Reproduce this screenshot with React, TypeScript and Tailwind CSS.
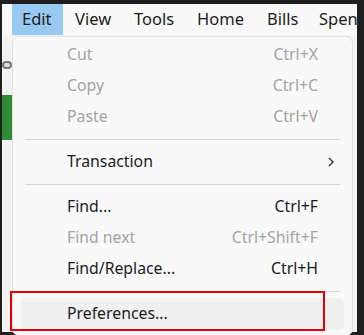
import React from "react";

type Item =
  | { kind: "item"; label: string; shortcut?: string; disabled?: boolean; sub?: boolean; hl?: boolean; h: number }
  | { kind: "sep"; h: number };

const items: Item[] = [
  { kind: "item", label: "Cut", shortcut: "Ctrl+X", disabled: true, h: 31 },
  { kind: "item", label: "Copy", shortcut: "Ctrl+C", disabled: true, h: 31 },
  { kind: "item", label: "Paste", shortcut: "Ctrl+V", disabled: true, h: 31 },
  { kind: "sep", h: 14 },
  { kind: "item", label: "Transaction", sub: true, h: 31 },
  { kind: "sep", h: 14 },
  { kind: "item", label: "Find...", shortcut: "Ctrl+F", h: 31 },
  { kind: "item", label: "Find next", shortcut: "Ctrl+Shift+F", disabled: true, h: 31 },
  { kind: "item", label: "Find/Replace...", shortcut: "Ctrl+H", h: 31 },
  { kind: "sep", h: 14 },
  { kind: "item", label: "Preferences...", hl: true, h: 32 },
];

export default function App() {
  return (
    <div
      className="relative w-[364px] h-[335px] overflow-hidden bg-[#1f1f1f]"
      style={{ fontFamily: '"Noto Sans", "Open Sans", sans-serif' }}
    >
      <div className="absolute left-[2px] top-[4px] w-[355px] h-[328px] overflow-hidden bg-[#f3f3f3]">
        <div className="flex h-[31px] items-stretch bg-[#f9f9f9] text-[16.5px] text-[#1b1b1b] whitespace-nowrap">
          <div className="ml-[10px] flex w-[51px] shrink-0 items-center bg-[#99c9f0] pl-[10px]">Edit</div>
          <div className="w-[12px] shrink-0" />
          <div className="flex w-[59px] shrink-0 items-center">View</div>
          <div className="flex w-[63px] shrink-0 items-center">Tools</div>
          <div className="flex w-[70px] shrink-0 items-center">Home</div>
          <div className="flex w-[52px] shrink-0 items-center">Bills</div>
          <div className="flex shrink-0 items-center">Spending</div>
        </div>
        <div className="absolute left-0 top-[57px] h-[8px] w-[10px] rounded-sm border-2 border-[#777] bg-[#ddd]" />
        <div className="absolute left-0 top-[91px] h-[45px] w-[10px] bg-[#2e8b36]" />
      </div>

      <div className="absolute left-[12px] top-[36px] w-[341px] h-[300px] rounded-[7px] border border-[#e0e0e0] bg-[#f9f9f9] text-[15.8px] pt-[2px]">
        {items.map((it, i) =>
          it.kind === "sep" ? (
            <div key={i} className="flex items-center px-[12px]" style={{ height: it.h }}>
              <div className="h-px w-full bg-[#d4d4d4]" />
            </div>
          ) : (
            <div
              key={i}
              className={
                "mx-[8px] flex items-center rounded-[5px] pl-[46px] pr-[26px] " +
                (it.hl ? "bg-[#f0f0f0] " : "") +
                (it.disabled ? "text-[#a3a3a3]" : "text-[#1b1b1b]")
              }
              style={{ height: it.h }}
            >
              <span className="flex-1">{it.label}</span>
              {it.shortcut && <span>{it.shortcut}</span>}
              {it.sub && (
                <svg width="10" height="12" viewBox="0 0 10 12" className="mr-[-18px]">
                  <path d="M3 2 L7 6 L3 10" fill="none" stroke="#333" strokeWidth="1.4" />
                </svg>
              )}
            </div>
          )
        )}
      </div>

      <div className="absolute left-[10px] top-[291px] w-[315px] h-[40px] border-2 border-[#e00000]" />
    </div>
  );
}
